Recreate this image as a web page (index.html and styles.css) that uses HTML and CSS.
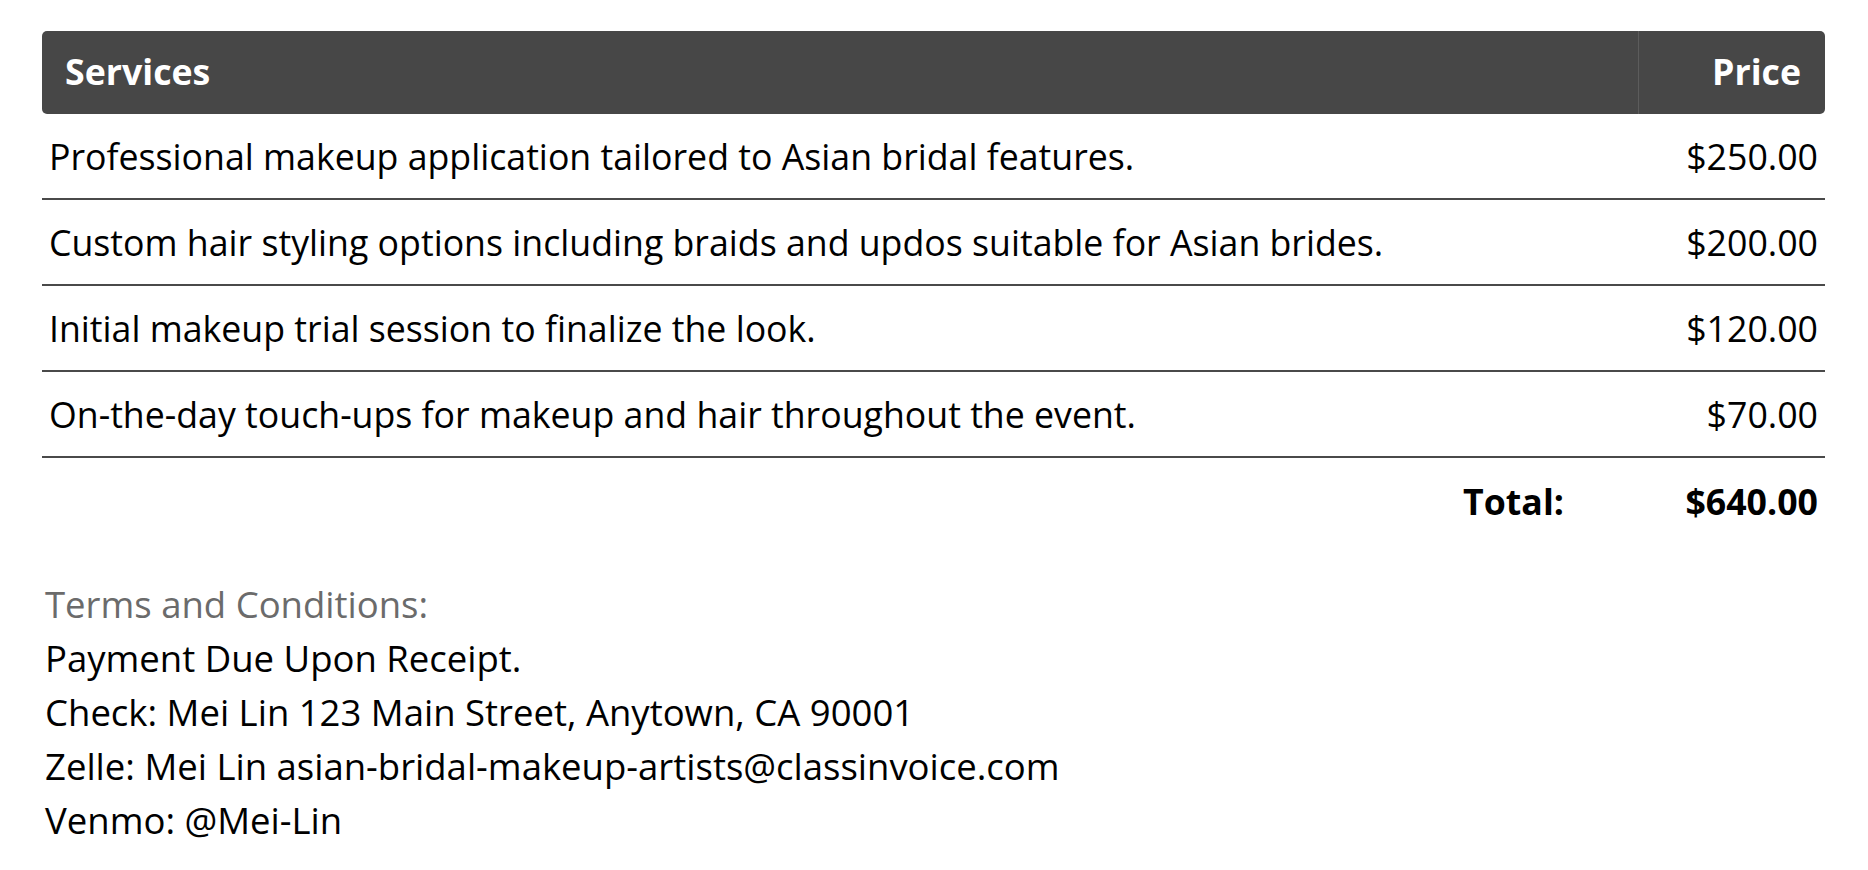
FILE: index.html
```html
<!DOCTYPE html>
<html lang="en">
<head>
<meta charset="utf-8">
<title>Invoice</title>
<link rel="stylesheet" href="styles.css">
</head>
<body>
<div class="invoice">
  <div class="head">
    <div class="svc">Services</div>
    <div class="price">Price</div>
  </div>
  <div class="row">
    <div class="desc">Professional makeup application tailored to Asian bridal features.</div>
    <div class="amt">$250.00</div>
  </div>
  <div class="row">
    <div class="desc">Custom hair styling options including braids and updos suitable for Asian brides.</div>
    <div class="amt">$200.00</div>
  </div>
  <div class="row">
    <div class="desc">Initial makeup trial session to finalize the look.</div>
    <div class="amt">$120.00</div>
  </div>
  <div class="row">
    <div class="desc">On-the-day touch-ups for makeup and hair throughout the event.</div>
    <div class="amt">$70.00</div>
  </div>
  <div class="total">
    <div class="label">Total:</div>
    <div class="amt">$640.00</div>
  </div>
  <div class="terms">
    <div class="terms-title">Terms and Conditions:</div>
    <div>Payment Due Upon Receipt.</div>
    <div>Check: Mei Lin 123 Main Street, Anytown, CA 90001</div>
    <div>Zelle: Mei Lin asian-bridal-makeup-artists@classinvoice.com</div>
    <div>Venmo: @Mei-Lin</div>
  </div>
</div>
</body>
</html>
```

FILE: styles.css
```css
html, body {
  margin: 0;
  padding: 0;
  background: #fff;
}
body {
  font-family: "Open Sans", "Liberation Sans", sans-serif;
  font-size: 35.7px;
  color: #000;
}
.invoice {
  padding: 31px 43px 0 42px;
}
.head {
  display: flex;
  align-items: stretch;
  height: 83px;
  background: #474747;
  color: #fff;
  border-radius: 5px;
  font-size: 35.7px;
  font-weight: 700;
}
.head .svc {
  flex: 1;
  display: flex;
  align-items: center;
  padding: 0 0 4px 23px;
}
.head .price {
  width: 187px;
  box-sizing: border-box;
  border-left: 1px solid #5c5c5c;
  display: flex;
  align-items: center;
  justify-content: flex-end;
  padding: 0 24px 4px 0;
}
.row, .total {
  display: flex;
  align-items: center;
  height: 86px;
  box-sizing: border-box;
}
.row {
  border-bottom: 2px solid #4a4a4a;
}
.desc {
  flex: 1;
  padding-left: 7px;
}
.amt {
  width: 187px;
  box-sizing: border-box;
  text-align: right;
  padding-right: 7px;
}
.total {
  font-weight: 700;
}
.total .label {
  flex: 1;
  text-align: right;
  padding-right: 74px;
}
.terms {
  margin-top: 33px;
  padding-left: 3px;
  font-size: 36.5px;
  line-height: 54px;
}
.terms-title {
  color: #6b6b6b;
}
```
